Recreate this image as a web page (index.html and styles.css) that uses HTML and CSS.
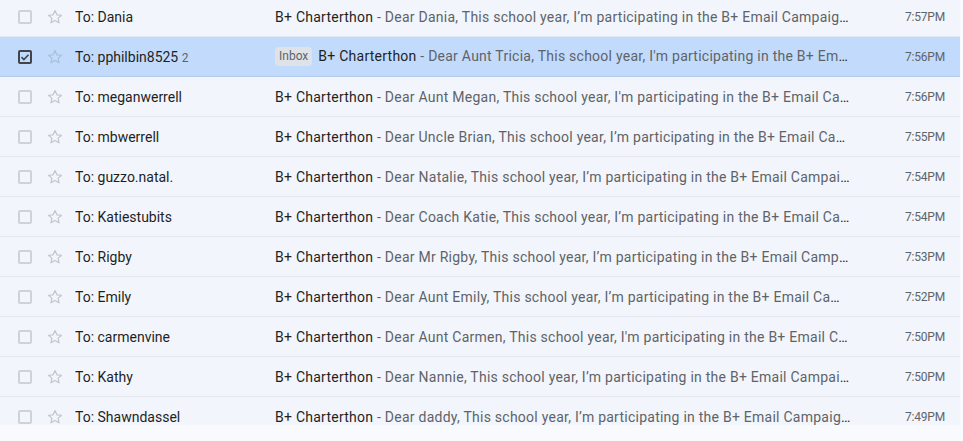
FILE: index.html
```html
<!DOCTYPE html>
<html>
<head>
<meta charset="utf-8">
<link rel="stylesheet" href="styles.css">
</head>
<body>
<div class="list">
  <div class="rows">
    <div class="row">
      <span class="cb"></span>
      <svg class="star" viewBox="0 0 24 24"><path d="M12 3.5l2.6 5.6 6.1.6-4.6 4.1 1.3 6-5.4-3.1-5.4 3.1 1.3-6-4.6-4.1 6.1-.6z"/></svg>
      <span class="sender">To: Dania</span>
      <span class="content"><span class="subj">B+ Charterthon</span><span class="snip"> - Dear Dania, This school year, I’m participating in the B+ Email Campaign to raise funds for my school</span></span>
      <span class="time">7:57PM</span>
    </div>
    <div class="row sel">
      <span class="cb on"><svg viewBox="0 0 14 14"><path d="M3.5 7.2l2.4 2.3 4.6-4.8"/></svg></span>
      <svg class="star" viewBox="0 0 24 24"><path d="M12 3.5l2.6 5.6 6.1.6-4.6 4.1 1.3 6-5.4-3.1-5.4 3.1 1.3-6-4.6-4.1 6.1-.6z"/></svg>
      <span class="sender">To: pphilbin8525 <span class="cnt">2</span></span>
      <span class="content"><span class="label">Inbox</span><span class="subj">B+ Charterthon</span><span class="snip"> - Dear Aunt Tricia, This school year, I'm participating in the B+ Email Campaign to raise funds</span></span>
      <span class="time">7:56PM</span>
    </div>
    <div class="row">
      <span class="cb"></span>
      <svg class="star" viewBox="0 0 24 24"><path d="M12 3.5l2.6 5.6 6.1.6-4.6 4.1 1.3 6-5.4-3.1-5.4 3.1 1.3-6-4.6-4.1 6.1-.6z"/></svg>
      <span class="sender">To: meganwerrell</span>
      <span class="content"><span class="subj">B+ Charterthon</span><span class="snip"> - Dear Aunt Megan, This school year, I'm participating in the B+ Email Campaign to raise funds</span></span>
      <span class="time">7:56PM</span>
    </div>
    <div class="row">
      <span class="cb"></span>
      <svg class="star" viewBox="0 0 24 24"><path d="M12 3.5l2.6 5.6 6.1.6-4.6 4.1 1.3 6-5.4-3.1-5.4 3.1 1.3-6-4.6-4.1 6.1-.6z"/></svg>
      <span class="sender">To: mbwerrell</span>
      <span class="content"><span class="subj">B+ Charterthon</span><span class="snip"> - Dear Uncle Brian, This school year, I’m participating in the B+ Email Campaign to raise funds</span></span>
      <span class="time">7:55PM</span>
    </div>
    <div class="row">
      <span class="cb"></span>
      <svg class="star" viewBox="0 0 24 24"><path d="M12 3.5l2.6 5.6 6.1.6-4.6 4.1 1.3 6-5.4-3.1-5.4 3.1 1.3-6-4.6-4.1 6.1-.6z"/></svg>
      <span class="sender">To: guzzo.natal.</span>
      <span class="content"><span class="subj">B+ Charterthon</span><span class="snip"> - Dear Natalie, This school year, I’m participating in the B+ Email Campaign to raise funds</span></span>
      <span class="time">7:54PM</span>
    </div>
    <div class="row">
      <span class="cb"></span>
      <svg class="star" viewBox="0 0 24 24"><path d="M12 3.5l2.6 5.6 6.1.6-4.6 4.1 1.3 6-5.4-3.1-5.4 3.1 1.3-6-4.6-4.1 6.1-.6z"/></svg>
      <span class="sender">To: Katiestubits</span>
      <span class="content"><span class="subj">B+ Charterthon</span><span class="snip"> - Dear Coach Katie, This school year, I’m participating in the B+ Email Campaign to raise funds</span></span>
      <span class="time">7:54PM</span>
    </div>
    <div class="row">
      <span class="cb"></span>
      <svg class="star" viewBox="0 0 24 24"><path d="M12 3.5l2.6 5.6 6.1.6-4.6 4.1 1.3 6-5.4-3.1-5.4 3.1 1.3-6-4.6-4.1 6.1-.6z"/></svg>
      <span class="sender">To: Rigby</span>
      <span class="content"><span class="subj">B+ Charterthon</span><span class="snip"> - Dear Mr Rigby, This school year, I’m participating in the B+ Email Campaign to raise funds</span></span>
      <span class="time">7:53PM</span>
    </div>
    <div class="row">
      <span class="cb"></span>
      <svg class="star" viewBox="0 0 24 24"><path d="M12 3.5l2.6 5.6 6.1.6-4.6 4.1 1.3 6-5.4-3.1-5.4 3.1 1.3-6-4.6-4.1 6.1-.6z"/></svg>
      <span class="sender">To: Emily</span>
      <span class="content"><span class="subj">B+ Charterthon</span><span class="snip"> - Dear Aunt Emily, This school year, I’m participating in the B+ Email Campaign to raise funds</span></span>
      <span class="time">7:52PM</span>
    </div>
    <div class="row">
      <span class="cb"></span>
      <svg class="star" viewBox="0 0 24 24"><path d="M12 3.5l2.6 5.6 6.1.6-4.6 4.1 1.3 6-5.4-3.1-5.4 3.1 1.3-6-4.6-4.1 6.1-.6z"/></svg>
      <span class="sender">To: carmenvine</span>
      <span class="content"><span class="subj">B+ Charterthon</span><span class="snip"> - Dear Aunt Carmen, This school year, I'm participating in the B+ Email Campaign to raise funds</span></span>
      <span class="time">7:50PM</span>
    </div>
    <div class="row">
      <span class="cb"></span>
      <svg class="star" viewBox="0 0 24 24"><path d="M12 3.5l2.6 5.6 6.1.6-4.6 4.1 1.3 6-5.4-3.1-5.4 3.1 1.3-6-4.6-4.1 6.1-.6z"/></svg>
      <span class="sender">To: Kathy</span>
      <span class="content"><span class="subj">B+ Charterthon</span><span class="snip"> - Dear Nannie, This school year, I’m participating in the B+ Email Campaign to raise funds</span></span>
      <span class="time">7:50PM</span>
    </div>
    <div class="row">
      <span class="cb"></span>
      <svg class="star" viewBox="0 0 24 24"><path d="M12 3.5l2.6 5.6 6.1.6-4.6 4.1 1.3 6-5.4-3.1-5.4 3.1 1.3-6-4.6-4.1 6.1-.6z"/></svg>
      <span class="sender">To: Shawndassel</span>
      <span class="content"><span class="subj">B+ Charterthon</span><span class="snip"> - Dear daddy, This school year, I’m participating in the B+ Email Campaign to raise funds</span></span>
      <span class="time">7:49PM</span>
    </div>
  </div>
</div>
</body>
</html>
```

FILE: styles.css
```css
html, body {
  margin: 0;
  padding: 0;
  background: #f8fafd;
}
body {
  font-family: Roboto, "Liberation Sans", Arial, sans-serif;
  font-size: 14px;
  color: #1f1f1f;
}
.list {
  width: 960px;
  height: 425px;
  overflow: hidden;
  background: #f2f6fc;
}
.rows {
  margin-top: -2px;
}
.row {
  height: 39px;
  border-bottom: 1px solid #e4e8ee;
  display: flex;
  align-items: center;
  padding-left: 18px;
  padding-right: 15px;
  box-sizing: content-box;
}
.row:first-child {
  height: 38px;
}
.row.sel {
  background: #c2dbfc;
  border-bottom-color: #b3ccec;
}
.cb {
  width: 10px;
  height: 10px;
  border: 2px solid #cfd2d6;
  border-radius: 2px;
  flex: none;
  display: flex;
}
.cb.on {
  border-color: #414549;
}
.cb svg {
  margin: -2px;
  width: 14px;
  height: 14px;
  fill: none;
  stroke: #414549;
  stroke-width: 1.6;
}
.star {
  width: 18px;
  height: 18px;
  margin-left: 14px;
  flex: none;
  fill: none;
  stroke: #c3c6ca;
  stroke-width: 1.6;
  stroke-linejoin: round;
}
.sel .star {
  stroke: #a9bfdc;
}
.sender {
  width: 200px;
  margin-left: 11px;
  flex: none;
  white-space: nowrap;
  overflow: hidden;
  color: #1f1f1f;
}
.cnt {
  font-size: 12px;
  color: #5f6368;
}
.content {
  flex: 1;
  min-width: 0;
  white-space: nowrap;
  overflow: hidden;
  text-overflow: ellipsis;
  margin-right: 54px;
  letter-spacing: 0.25px;
}
.label {
  display: inline-block;
  background: #dde3ea;
  color: #5f6368;
  font-size: 12px;
  line-height: 19px;
  padding: 0 4px;
  border-radius: 4px;
  margin-right: 6px;
  vertical-align: 1px;
  letter-spacing: 0;
}
.sel .label {
  background: #dfe3e8;
}
.subj {
  color: #1f1f1f;
}
.snip {
  color: #5f6368;
}
.time {
  flex: none;
  font-size: 12px;
  color: #5f6368;
  letter-spacing: -0.2px;
  text-align: right;
}
```
